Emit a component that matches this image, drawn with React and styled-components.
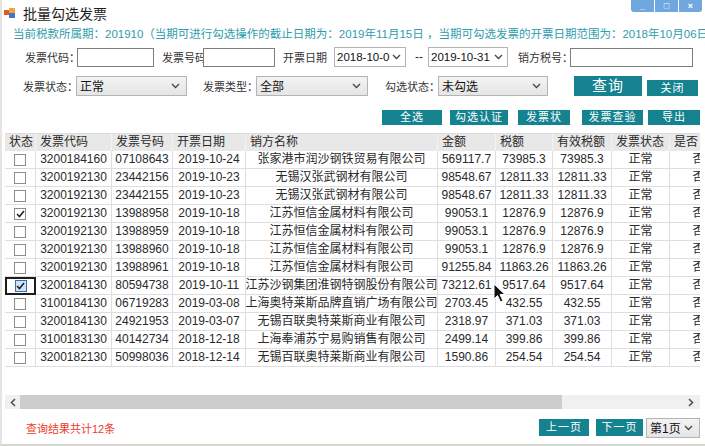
import React from 'react'
import styled, { createGlobalStyle } from 'styled-components'

const FONT = `"Liberation Sans", "Noto Sans CJK SC", sans-serif`
const TEAL = '#15828f'

const rows = [
  ['3200184160', '07108643', '2019-10-24', '张家港市润沙钢铁贸易有限公司', '569117.7', '73985.3', '73985.3'],
  ['3200192130', '23442156', '2019-10-23', '无锡汉张武钢材有限公司', '98548.67', '12811.33', '12811.33'],
  ['3200192130', '23442155', '2019-10-23', '无锡汉张武钢材有限公司', '98548.67', '12811.33', '12811.33'],
  ['3200192130', '13988958', '2019-10-18', '江苏恒信金属材料有限公司', '99053.1', '12876.9', '12876.9', 'checked'],
  ['3200192130', '13988959', '2019-10-18', '江苏恒信金属材料有限公司', '99053.1', '12876.9', '12876.9'],
  ['3200192130', '13988960', '2019-10-18', '江苏恒信金属材料有限公司', '99053.1', '12876.9', '12876.9'],
  ['3200192130', '13988961', '2019-10-18', '江苏恒信金属材料有限公司', '91255.84', '11863.26', '11863.26'],
  ['3200184130', '80594738', '2019-10-11', '江苏沙钢集团淮钢特钢股份有限公司', '73212.61', '9517.64', '9517.64', 'focus'],
  ['3100184130', '06719283', '2019-03-08', '上海奥特莱斯品牌直销广场有限公司', '2703.45', '432.55', '432.55'],
  ['3200184130', '24921953', '2019-03-07', '无锡百联奥特莱斯商业有限公司', '2318.97', '371.03', '371.03'],
  ['3100183130', '40142734', '2018-12-18', '上海奉浦苏宁易购销售有限公司', '2499.14', '399.86', '399.86'],
  ['3200182130', '50998036', '2018-12-14', '无锡百联奥特莱斯商业有限公司', '1590.86', '254.54', '254.54'],
]

const columns = [
  { title: '状态', w: 31 },
  { title: '发票代码', w: 76 },
  { title: '发票号码', w: 61 },
  { title: '开票日期', w: 73 },
  { title: '销方名称', w: 192 },
  { title: '金额', w: 58 },
  { title: '税额', w: 57 },
  { title: '有效税额', w: 59 },
  { title: '发票状态', w: 58 },
  { title: '是否', w: 58 },
]
const template = columns.map((c) => `${c.w}px`).join(' ')

const GlobalStyle = createGlobalStyle`
  html, body { margin: 0; padding: 0; background: #fff; }
  body { font-family: ${FONT}; color: #222; }
`

const Window = styled.div`
  position: relative;
  width: 705px;
  height: 446px;
  overflow: hidden;
  background: #fff;
  border-left: 2px solid #e4e4e4;
  border-bottom: 2px solid #d8d4d0;
  box-sizing: border-box;
  display: flex;
  flex-direction: column;
`

const TitleBar = styled.div`
  display: flex;
  align-items: flex-start;
  height: 24px;
`

const TitleText = styled.div`
  display: flex;
  align-items: center;
  gap: 7px;
  padding: 3px 0 0 2px;
  font-size: 14px;
  color: #1e1e1e;
`

const WinControls = styled.div`
  margin-left: auto;
  margin-right: 3px;
  display: flex;
  gap: 1px;
`

const WinBtn = styled.div`
  width: 23px;
  height: 12px;
  background: #6fa8de;
  border-radius: ${(p) => p.r || '0'};
  color: #fff;
  font-size: 9px;
  line-height: 12px;
  text-align: center;
  font-weight: bold;
`

const InfoLine = styled.div`
  margin: 3px 0 0 11px;
  font-size: 11.5px;
  line-height: 14px;
  color: #2f9cab;
  white-space: nowrap;
`

const FilterRow = styled.div`
  display: flex;
  align-items: center;
  height: ${(p) => p.h || 20}px;
  margin-top: ${(p) => p.mt || 0}px;
  padding-left: ${(p) => p.pl || 0}px;
`

const Label = styled.span`
  display: inline-block;
  width: ${(p) => p.w}px;
  margin-left: ${(p) => p.ml || 0}px;
  font-size: 11px;
  color: #333;
  white-space: nowrap;
`

const TextBox = styled.div`
  position: relative;
  width: ${(p) => p.w}px;
  height: 19px;
  box-sizing: border-box;
  border: 1px solid #7d7d7d;
  background: #fff;
`

const Select = styled.div`
  position: relative;
  width: ${(p) => p.w}px;
  height: ${(p) => p.h || 20}px;
  margin-left: ${(p) => p.ml || 0}px;
  box-sizing: border-box;
  border: 1px solid #b4b4b4;
  background: ${(p) => (p.plain ? '#fff' : 'linear-gradient(#f3f3f3, #e5e5e5)')};
  display: flex;
  align-items: center;
  padding-left: ${(p) => (p.plain ? 2 : 3)}px;
  font-size: ${(p) => p.fs || 12}px;
  color: #111;
  white-space: nowrap;
  overflow: hidden;
`

const SelectText = styled.span`
  flex: 1;
  overflow: hidden;
`

const Chevron = styled.svg`
  flex: none;
  width: 9px;
  height: 6px;
  margin: 0 ${(p) => p.mr || 6}px 0 2px;
`

const Dash = styled.span`
  margin: 0 5px 0 9px;
  font-size: 12px;
  color: #333;
`

const Button = styled.div`
  width: ${(p) => p.w}px;
  height: ${(p) => p.h || 15}px;
  margin-left: ${(p) => p.ml || 0}px;
  background: ${TEAL};
  color: #fff;
  font-size: ${(p) => p.fs || 11}px;
  line-height: ${(p) => p.h || 15}px;
  text-align: center;
  letter-spacing: 1px;
  white-space: nowrap;
  overflow: hidden;
  align-self: ${(p) => p.align || 'center'};
`

const Actions = styled.div`
  display: flex;
  margin: 14px 0 0 380px;
`

const Grid = styled.div`
  margin: 8px 0 0 3px;
  width: 695px;
  height: 262px;
  overflow: hidden;
  font-size: 12px;
`

const Row = styled.div`
  display: grid;
  grid-template-columns: ${template};
  height: ${(p) => (p.head ? 17 : 18)}px;
  background: ${(p) => (p.head ? '#e8e8e8' : '#fff')};
  border-top: ${(p) => (p.head ? '1px solid #dcdcdc' : 'none')};
`

const HeadCell = styled.div`
  padding-left: 4px;
  line-height: 17px;
  color: #2a2a2a;
  white-space: nowrap;
  overflow: hidden;
  border-right: 1px solid #f4f4f4;
`

const Cell = styled.div`
  position: relative;
  box-sizing: border-box;
  border-right: 1px solid #dedede;
  border-bottom: 1px solid #dedede;
  line-height: 17px;
  text-align: center;
  white-space: nowrap;
  color: #2a2a2a;
  display: flex;
  align-items: center;
  justify-content: center;
  ${(p) => p.focus && 'border: 2px solid #1d1d1d;'}
`

const Check = styled.div`
  width: 12px;
  height: 12px;
  box-sizing: border-box;
  border: 1px solid ${(p) => (p.focus ? '#3c6fa8' : '#8e8e8e')};
  background: ${(p) => (p.focus ? '#cfe3f6' : '#fff')};
  display: flex;
  align-items: center;
  justify-content: center;
`

const ScrollBar = styled.div`
  display: flex;
  align-items: center;
  margin-left: 3px;
  width: 695px;
  height: 14px;
  background: #f0f0f0;
`

const ScrollArrow = styled.div`
  width: 15px;
  display: flex;
  justify-content: center;
  margin-left: ${(p) => (p.end ? 'auto' : '0')};
  margin-right: ${(p) => (p.end ? '2px' : '0')};
`

const Thumb = styled.div`
  width: 542px;
  height: 14px;
  background: #cdcdcd;
`

const Footer = styled.div`
  display: flex;
  align-items: center;
  margin-top: 9px;
  height: 19px;
  padding-right: 5px;
`

const Count = styled.span`
  margin-left: 24px;
  font-size: 11px;
  color: #ee3b2b;
  margin-right: auto;
`

const Cursor = styled.svg`
  position: absolute;
  left: 491px;
  top: 283px;
`

const ChevronIcon = ({ mr }) => (
  <Chevron viewBox="0 0 9 6" mr={mr}>
    <path d="M1 1 L4.5 4.5 L8 1" fill="none" stroke="#444" strokeWidth="1.3" />
  </Chevron>
)

const Arrow = ({ dir }) => (
  <svg width="6" height="9" viewBox="0 0 6 9">
    <path d={dir === 'left' ? 'M5 1 L1.5 4.5 L5 8' : 'M1 1 L4.5 4.5 L1 8'} fill="none" stroke="#555" strokeWidth="1.6" />
  </svg>
)

const AppIcon = () => (
  <svg width="12" height="12" viewBox="0 0 12 12">
    <rect x="0" y="3" width="5" height="5" fill="#e2572b" />
    <rect x="5" y="1" width="6" height="5" fill="#f2a33a" />
    <rect x="5" y="6" width="6" height="5" fill="#3b78c6" />
  </svg>
)

const Tick = () => (
  <svg width="9" height="8" viewBox="0 0 9 8">
    <path d="M1 4 L3.5 6.5 L8 1" fill="none" stroke="#222" strokeWidth="1.6" />
  </svg>
)

const App = () => (
  <Window>
    <GlobalStyle />
    <TitleBar>
      <TitleText>
        <AppIcon />
        批量勾选发票
      </TitleText>
      <WinControls>
        <WinBtn r="0 0 0 3px">_</WinBtn>
        <WinBtn>□</WinBtn>
        <WinBtn r="0 0 3px 0">×</WinBtn>
      </WinControls>
    </TitleBar>

    <InfoLine>
      当前税款所属期：201910（当期可进行勾选操作的截止日期为：2019年11月15日 ，当期可勾选发票的开票日期范围为：2018年10月06日至2019年10月31日）
    </InfoLine>

    <FilterRow mt={6} pl={23}>
      <Label w={52}>发票代码：</Label>
      <TextBox w={77} />
      <Label w={41} ml={8}>发票号码：</Label>
      <TextBox w={72} />
      <Label w={51} ml={8}>开票日期</Label>
      <Select w={72} plain fs={11.5}>
        <SelectText>2018-10-06</SelectText>
        <ChevronIcon mr={4} />
      </Select>
      <Dash>--</Dash>
      <Select w={80} plain fs={11.5}>
        <SelectText>2019-10-31</SelectText>
        <ChevronIcon mr={4} />
      </Select>
      <Label w={52} ml={10}>销方税号：</Label>
      <TextBox w={123} />
    </FilterRow>

    <FilterRow h={21} mt={8} pl={21}>
      <Label w={53}>发票状态：</Label>
      <Select w={111}>
        <SelectText>正常</SelectText>
        <ChevronIcon />
      </Select>
      <Label w={53} ml={16}>发票类型：</Label>
      <Select w={112}>
        <SelectText>全部</SelectText>
        <ChevronIcon />
      </Select>
      <Label w={53} ml={17}>勾选状态：</Label>
      <Select w={110}>
        <SelectText>未勾选</SelectText>
        <ChevronIcon />
      </Select>
      <Button w={68} h={20} fs={15} ml={26}>查询</Button>
      <Button w={51} h={16} ml={5} align="flex-end">关闭</Button>
    </FilterRow>

    <Actions>
      <Button w={60}>全选</Button>
      <Button w={58} ml={8}>勾选认证</Button>
      <Button w={52} ml={10}>发票状</Button>
      <Button w={61} ml={12}>发票查验</Button>
      <Button w={52} ml={5}>导出</Button>
    </Actions>

    <Grid>
      <Row head>
        {columns.map((c) => (
          <HeadCell key={c.title}>{c.title}</HeadCell>
        ))}
      </Row>
      {rows.map((r, i) => (
        <Row key={i}>
          <Cell focus={r[7] === 'focus'}>
            <Check focus={r[7] === 'focus'}>{r[7] && <Tick />}</Check>
          </Cell>
          {r.slice(0, 7).map((v, j) => (
            <Cell key={j}>{v}</Cell>
          ))}
          <Cell>正常</Cell>
          <Cell>否</Cell>
        </Row>
      ))}
    </Grid>

    <ScrollBar>
      <ScrollArrow>
        <Arrow dir="left" />
      </ScrollArrow>
      <Thumb />
      <ScrollArrow end>
        <Arrow dir="right" />
      </ScrollArrow>
    </ScrollBar>

    <Footer>
      <Count>查询结果共计12条</Count>
      <Button w={50} h={17}>上一页</Button>
      <Button w={47} h={17} ml={7}>下一页</Button>
      <Select w={54} h={20} ml={3} fs={12}>
        <SelectText>第1页</SelectText>
        <ChevronIcon />
      </Select>
    </Footer>

    <Cursor width="14" height="20" viewBox="0 0 14 20">
      <path d="M1 1 L1 16 L4.5 12.5 L7.5 19 L10 18 L7 11.5 L12 11.5 Z" fill="#111" stroke="#fff" strokeWidth="1" />
    </Cursor>
  </Window>
)

export default App
